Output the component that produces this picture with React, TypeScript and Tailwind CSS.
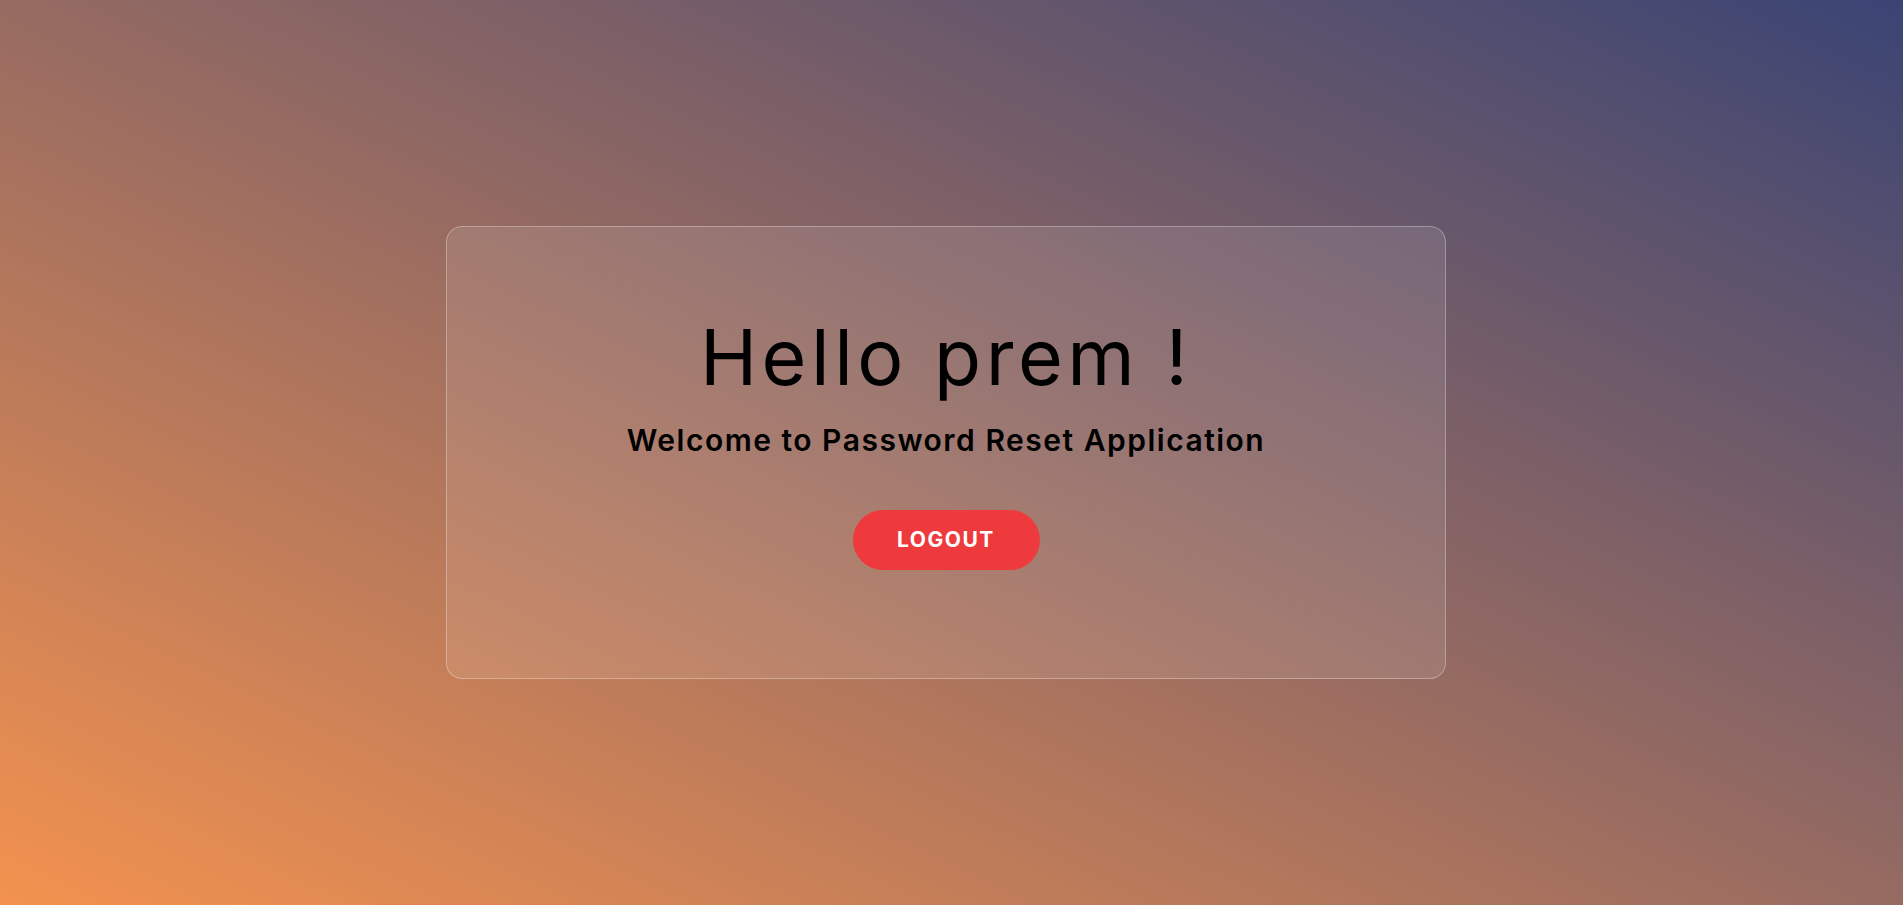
import React from "react";

export default function App() {
  return (
    <div
      className="w-full h-[905px] flex items-center justify-center pr-[11px] bg-[linear-gradient(to_top_right,#f3924f,#3a4474)]"
      style={{ fontFamily: "Inter, 'Noto Sans', sans-serif" }}
    >
      <div className="w-[1000px] h-[453px] rounded-2xl border border-white/30 bg-white/10 flex flex-col items-center pt-[90px]">
        <h1 className="text-[77px] leading-[80px] font-normal text-black tracking-[4.5px]">Hello prem !</h1>
        <h2 className="mt-[23px] text-[30px] leading-[40px] font-semibold text-black tracking-[1.5px]">Welcome to Password Reset Application</h2>
        <button className="mt-[50px] w-[187px] h-[60px] rounded-full bg-[#ef3a3d] text-white font-bold text-[21px] tracking-[1.5px]">LOGOUT</button>
      </div>
    </div>
  );
}
